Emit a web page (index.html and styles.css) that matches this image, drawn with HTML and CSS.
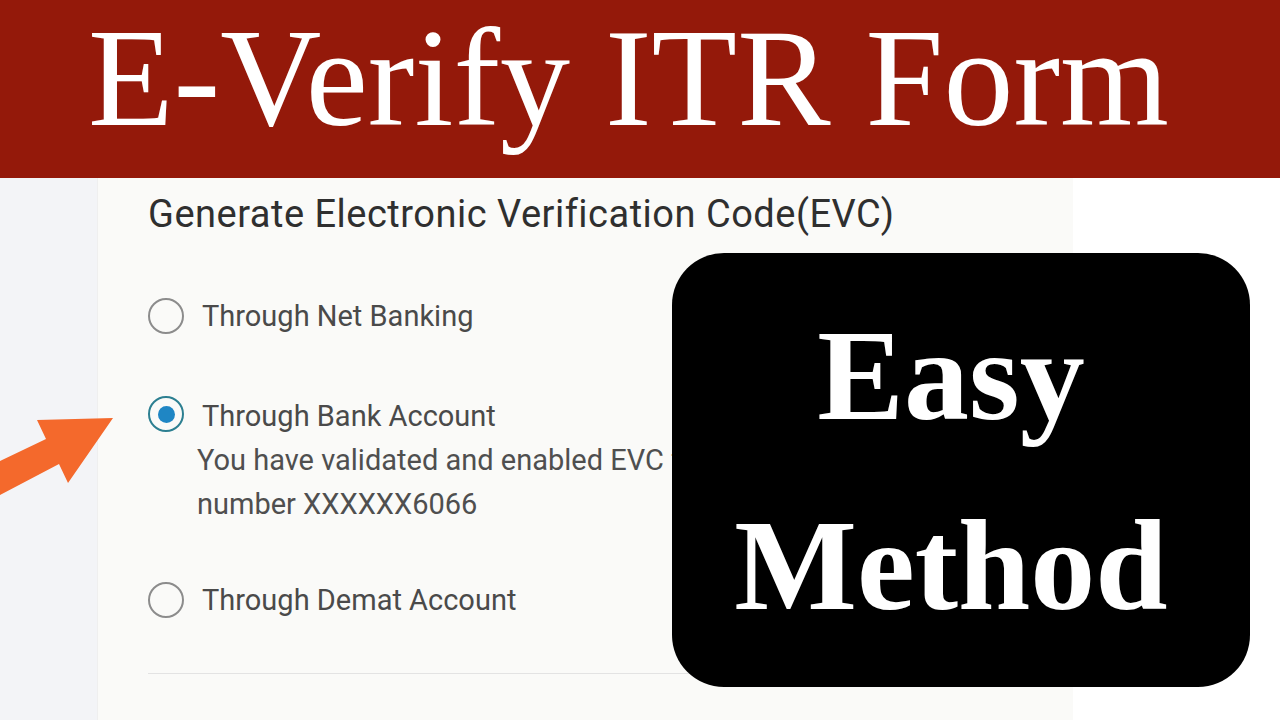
FILE: index.html
```html
<!DOCTYPE html>
<html lang="en">
<head>
<meta charset="utf-8">
<title>E-Verify ITR Form</title>
<link rel="stylesheet" href="styles.css">
</head>
<body>
<header class="banner">
  <h1 class="banner-title">E-Verify ITR Form</h1>
</header>
<main class="page">
  <aside class="side"></aside>
  <section class="card">
    <h2 class="card-title">Generate Electronic Verification Code(EVC)</h2>
    <div class="opt opt-first">
      <span class="radio"></span>
      <div class="opt-body"><div class="opt-label">Through Net Banking</div></div>
    </div>
    <div class="opt opt-second">
      <span class="radio radio-on"><span class="dot"></span></span>
      <div class="opt-body">
        <div class="opt-label">Through Bank Account</div>
        <div class="opt-desc">You have validated and enabled EVC for bank account<br>number XXXXXX6066</div>
      </div>
    </div>
    <div class="opt opt-third">
      <span class="radio"></span>
      <div class="opt-body"><div class="opt-label">Through Demat Account</div></div>
    </div>
    <div class="divider"></div>
  </section>
  <div class="rest"></div>

  <svg class="arrow" width="120" height="100" viewBox="0 400 120 100" aria-hidden="true">
    <polygon points="0,461 46,439 37,420 113,418 68,483 59,464 0,495" fill="#f4692c"/>
  </svg>

  <div class="badge">
    <div class="badge-line">Easy</div>
    <div class="badge-line">Method</div>
  </div>
</main>
</body>
</html>
```
FILE: styles.css
```css
* { box-sizing: border-box; }
html, body { margin: 0; padding: 0; }
body {
  width: 1280px;
  height: 720px;
  overflow: hidden;
  background: #ffffff;
  font-family: Roboto, "Liberation Sans", sans-serif;
}
.banner {
  height: 178px;
  background: #94190a;
  padding-left: 88px;
}
.banner-title {
  margin: 0;
  font-family: "Liberation Serif", "Times New Roman", serif;
  font-weight: 400;
  font-size: 140px;
  line-height: 156px;
  color: #ffffff;
  white-space: nowrap;
}
.page {
  position: relative;
  display: flex;
  height: 542px;
}
.side {
  width: 97px;
  flex: none;
  background: #f3f4f7;
}
.card {
  width: 976px;
  flex: none;
  background: #fafaf8;
  border-left: 1px solid #efefef;
  padding: 16px 0 0 50px;
}
.rest {
  flex: 1;
  background: #ffffff;
}
.card-title {
  margin: 0 0 60px 0;
  font-weight: 400;
  font-size: 38px;
  line-height: 40px;
  letter-spacing: 0.5px;
  color: #2f2f2f;
  white-space: nowrap;
}
.opt {
  display: flex;
  align-items: flex-start;
}
.opt-first { margin-bottom: 56px; }
.opt-second { margin-bottom: 52px; }
.opt-third { margin-bottom: 51px; }
.radio {
  width: 36px;
  height: 36px;
  margin-top: 4px;
  border-radius: 50%;
  border: 2.5px solid #8c8c8c;
  flex: none;
  display: flex;
  align-items: center;
  justify-content: center;
}
.radio-on {
  border-color: #2c7f91;
  margin-top: 2px;
}
.dot {
  width: 17px;
  height: 17px;
  border-radius: 50%;
  background: #1f86c4;
}
.opt-body {
  margin-left: 18px;
  font-size: 29px;
  line-height: 44px;
  color: #4a4a4a;
  white-space: nowrap;
}
.opt-desc {
  margin-left: -5px;
  color: #4f4f4f;
}
.divider {
  width: 926px;
  height: 1px;
  background: #e3e3e3;
}
.arrow {
  position: absolute;
  left: 0;
  top: 222px;
}
.badge {
  position: absolute;
  left: 672px;
  top: 75px;
  width: 578px;
  height: 434px;
  background: #000000;
  border-radius: 52px;
  display: flex;
  flex-direction: column;
  justify-content: center;
  align-items: center;
  padding-right: 20px;
}
.badge-line {
  font-family: "Liberation Serif", "Times New Roman", serif;
  font-weight: 700;
  font-size: 130px;
  line-height: 190px;
  color: #ffffff;
}
```
